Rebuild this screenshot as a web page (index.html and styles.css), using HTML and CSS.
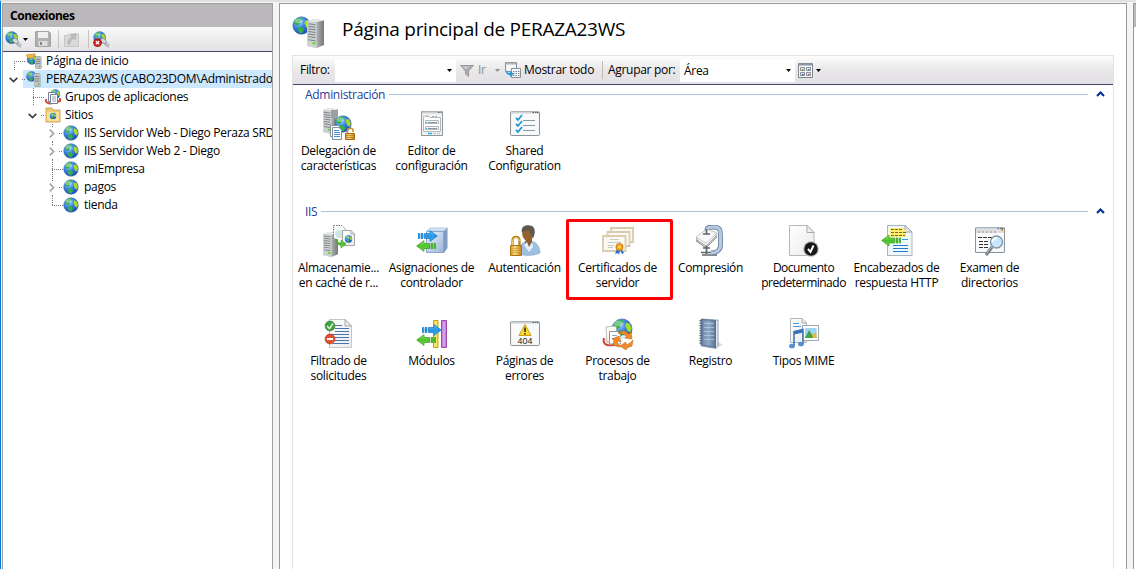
FILE: index.html
```html
<!DOCTYPE html>
<html lang="es">
<head>
<meta charset="utf-8">
<title>Administrador de IIS</title>
<link rel="stylesheet" href="styles.css">
</head>
<body>
<svg class="defs" width="0" height="0" aria-hidden="true">
  <defs>
    <radialGradient id="gSea" cx=".35" cy=".28" r=".8"><stop offset="0" stop-color="#b4e2ff"/><stop offset=".45" stop-color="#3b82e2"/><stop offset="1" stop-color="#1a47a8"/></radialGradient>
    <linearGradient id="gSteel" x1="0" x2="1"><stop offset="0" stop-color="#e8e8e8"/><stop offset=".6" stop-color="#a9adad"/><stop offset="1" stop-color="#737878"/></linearGradient>
    <linearGradient id="gBlue" x1="0" y1="0" x2="0" y2="1"><stop offset="0" stop-color="#6cc4f8"/><stop offset=".5" stop-color="#2196e4"/><stop offset="1" stop-color="#49b2f0"/></linearGradient>
    <linearGradient id="gGreen" x1="0" y1="0" x2="0" y2="1"><stop offset="0" stop-color="#9be86c"/><stop offset=".5" stop-color="#4cc22a"/><stop offset="1" stop-color="#7adb52"/></linearGradient>
    <linearGradient id="gBox" x1="0" y1="0" x2="1" y2="1"><stop offset="0" stop-color="#edf5fc"/><stop offset="1" stop-color="#9ab5d8"/></linearGradient>
    <linearGradient id="gGold" x1="0" x2="1"><stop offset="0" stop-color="#d6982a"/><stop offset=".4" stop-color="#f9db84"/><stop offset="1" stop-color="#bd7d14"/></linearGradient>
    <linearGradient id="gPaper" x1="0" y1="0" x2="1" y2="1"><stop offset="0" stop-color="#fff"/><stop offset="1" stop-color="#ebebee"/></linearGradient>
    <linearGradient id="gBook" x1="0" x2="1"><stop offset="0" stop-color="#6b86aa"/><stop offset=".5" stop-color="#8fa9c9"/><stop offset="1" stop-color="#5d7799"/></linearGradient>
  </defs>
  <symbol id="globe" viewBox="0 0 16 16">
    <circle cx="8" cy="8" r="7.300" fill="url(#gSea)" stroke="#3a64a8" stroke-width=".5"/>
    <path d="M2 4.500 4.500 1.800 8 1.300 9 3 7 4.500 6.500 7 4.500 8 2 6.500ZM5.500 9 8.500 9.500 10 11.500 8.500 14.500 6 14 5 11.500Z" fill="#35b04a"/>
    <path d="M11 3.500 13.500 4 15 7.500 14 10.500 12 9.500 10.500 6Z" fill="#a2dc28"/>
    <ellipse cx="5.500" cy="4" rx="3.200" ry="2" fill="#fff" opacity=".35"/>
  </symbol>
  <symbol id="server" viewBox="0 0 14 28" preserveAspectRatio="none">
    <path d="M0 2 6 0 14 1.500V25L8 28 0 26Z" fill="url(#gSteel)"/>
    <path d="M0 2 8 3V28L0 26Z" fill="#cfd2d2"/><path d="M0 2 6 0 14 1.500 8 3Z" fill="#e9eaea"/>
    <path d="M1 4.500 7 5.500M1 7 7 8M1 9.500 7 10.500M1 12 7 13M1 14.500 7 15.500M1 17 7 18M1 20 7 21" stroke="#7d8282"/>
    <rect x="4.500" y="22.500" width="2.500" height="2" fill="#5ce01e"/>
  </symbol>
  <symbol id="serverMini" viewBox="0 0 6 12" preserveAspectRatio="none">
    <path d="M0 .5H5L6 1.500V11.500H1L0 10.500Z" fill="#c3c6c6" stroke="#8b8f8f" stroke-width=".6"/>
    <path d="M1 3H5M1 5H5M1 7H5" stroke="#737878" stroke-width=".8"/><path d="M3.500 9.500H5" stroke="#47c318"/>
  </symbol>
  <symbol id="arrowR" viewBox="0 0 20 12">
    <path d="M0 3.500H1.500V8.500H0ZM3 3.500H5V8.500H3ZM6.500 3.500H12V.6L19.300 6 12 11.400V8.500H6.500Z" fill="url(#gBlue)" stroke="#1576c0" stroke-width=".7"/>
  </symbol>
  <symbol id="arrowL" viewBox="0 0 20 12">
    <path d="M20 3.500H18.500V8.500H20ZM17 3.500H15V8.500H17ZM13.500 3.500H8V.6L.7 6 8 11.400V8.500H13.500Z" fill="url(#gGreen)" stroke="#339c19" stroke-width=".7"/>
  </symbol>
  <symbol id="window" viewBox="0 0 30 25" preserveAspectRatio="none">
    <rect x=".5" y=".5" width="29" height="24" rx="1" fill="#f4f5f6" stroke="#8c9399"/>
    <path d="M1 1.500H29" stroke="#cdd3d9" stroke-width="2"/><path d="M22.500 1.500H24M25 1.500H26.500M27 1.500H28.500" stroke="#50606e"/>
    <rect x="2" y="3" width="26" height="20" fill="#fafafa"/>
  </symbol>
  <symbol id="plug" viewBox="0 0 18 18">
    <path d="M9 10C13 9 12 15 17 16" fill="none" stroke="#7a858b" stroke-width="3"/><path d="M9 10C13 9 12 15 17 16" fill="none" stroke="#cbd3d6" stroke-width="1.400"/>
    <use href="#globe" width="14" height="14"/><ellipse cx="11" cy="10.500" rx="3.300" ry="2.200" transform="rotate(40 11 10.500)" fill="#d5dbdd" stroke="#7b878d" stroke-width=".7"/>
  </symbol>
  <symbol id="caret" viewBox="0 0 5 3"><path d="M0 0H5L2.500 3Z" fill="currentColor"/></symbol>
  <symbol id="collapse" viewBox="0 0 9 6"><path d="M1 5 4.500 1.500 8 5" fill="none" stroke="#002d96" stroke-width="2"/></symbol>
  <symbol id="open" viewBox="0 0 9 6"><path d="M.7.800 4.500 4.600 8.300.800" fill="none" stroke="#404040" stroke-width="1.700"/></symbol>
  <symbol id="closed" viewBox="0 0 6 9"><path d="M.8.700 4.600 4.500.8 8.300" fill="none" stroke="#a6a6a6" stroke-width="1.700"/></symbol>
</svg>

<div class="app">
  <aside class="connections">
    <h2 class="pane-title">Conexiones</h2>
    <div class="pane-tools">
      <svg class="tool-plug" width="17" height="17"><use href="#plug"/></svg>
      <svg class="tool-caret" width="5" height="3"><use href="#caret"/></svg>
      <svg class="tool-save" width="16" height="16" viewBox="0 0 16 16"><path d="M.7.700H14L15.300 2V15.300H.7Z" fill="#b2b2b2" stroke="#979797"/><path d="M3 1H13V7H3Z" fill="#f0f0f0"/><path d="M3.500 10H12.500V15H3.500Z" fill="#dedede"/><path d="M5 11H7V14H5Z" fill="#888"/></svg>
      <i class="sep"></i>
      <svg class="tool-up" width="15" height="15" viewBox="0 0 15 15"><path d="M.5 3.500H4L5 2H14.500V14.500H.5Z" fill="#dadada" stroke="#c6c6c6"/><path d="M3.500 12C4 8 5 6 8 5L6.500 3 12 1.500 11.500 7.500 9.800 6.500C7 8 6 10 6 12Z" fill="#bbb" stroke="#aaa" stroke-width=".5"/></svg>
      <i class="sep second"></i>
      <svg width="17" height="17" viewBox="0 0 17 17"><use href="#plug" width="17" height="17"/><circle cx="4.500" cy="11.700" r="4" fill="#cf1b1b" stroke="#8d1010" stroke-width=".5"/><path d="M2.800 10 6.200 13.400M6.200 10 2.800 13.400" stroke="#fff" stroke-width="1.300"/></svg>
    </div>
    <ul class="tree">
      <li class="l1"><svg class="twig" width="17" height="18"><path class="dots" d="M5.500 9V18M5 9.500H17"/></svg>
        <svg width="16" height="16" viewBox="0 0 16 16"><use href="#globe" x=".5" y="1" width="11" height="11"/><use href="#serverMini" x="9" y="3" width="6.500" height="13"/><path d="M0 2 3 1 6 2 9 0 8 4 5 5 2 5Z" fill="#f5b93a" stroke="#d48b17" stroke-width=".5"/></svg><span>Página de inicio</span></li>
      <li class="l1 selected"><svg class="twig" width="17" height="18"><use href="#open" y="7" width="9" height="6"/><path class="dots" d="M13 9.500H17"/></svg>
        <svg width="16" height="16" viewBox="0 0 16 16"><use href="#globe" y="0" width="11" height="11"/><use href="#serverMini" x="8" y="2" width="6.500" height="14"/></svg><span class="root">PERAZA23WS (CABO23DOM\Administrado</span></li>
      <li class="l2"><svg class="twig" width="17" height="18"><path class="dots" d="M5.500 0V18M5 9.500H17"/></svg>
        <svg width="16" height="16" viewBox="0 0 16 16"><use href="#globe" x="5" width="10.500" height="10.500"/><path d="M1 10C0 14 4 15 8 14L15 12V9" fill="none" stroke="#d04838" stroke-width="2"/><path d="M3.500 3.500H10.500V12.500H3.500Z" fill="#fff" stroke="#718096"/><path d="M5.500 5.500H12.500V14.500H5.500Z" fill="#fff" stroke="#718096"/><path d="M7 8H11M7 10H11M7 12H11" stroke="#91a3b7"/></svg><span>Grupos de aplicaciones</span></li>
      <li class="l2"><svg class="twig" width="17" height="18"><use href="#open" y="7" width="9" height="6"/><path class="dots" d="M13 9.500H17"/></svg>
        <svg width="16" height="16" viewBox="0 0 16 16"><path d="M1 3V1H7L8 3H15V15H1Z" fill="#f0cc76" stroke="#c99c3e" stroke-width=".8"/><path d="M2 5H14V14H2Z" fill="#f9e19b"/><use href="#globe" x="4.500" y="5.500" width="7" height="7"/></svg><span>Sitios</span></li>
      <li class="l3"><svg class="twig" width="16" height="18"><path class="dots" d="M5.500 0V3M5.500 17V18M12 9.500H16"/><use href="#closed" x="2" y="5" width="6" height="9"/></svg><svg width="16" height="16"><use href="#globe"/></svg><span>IIS Servidor Web - Diego Peraza SRD</span></li>
      <li class="l3"><svg class="twig" width="16" height="18"><path class="dots" d="M5.500 0V3M5.500 17V18M12 9.500H16"/><use href="#closed" x="2" y="5" width="6" height="9"/></svg><svg width="16" height="16"><use href="#globe"/></svg><span>IIS Servidor Web 2 - Diego</span></li>
      <li class="l3"><svg class="twig" width="16" height="18"><path class="dots" d="M5.500 0V18M5 9.500H16"/></svg><svg width="16" height="16"><use href="#globe"/></svg><span>miEmpresa</span></li>
      <li class="l3"><svg class="twig" width="16" height="18"><path class="dots" d="M5.500 0V3M5.500 17V18M12 9.500H16"/><use href="#closed" x="2" y="5" width="6" height="9"/></svg><svg width="16" height="16"><use href="#globe"/></svg><span>pagos</span></li>
      <li class="l3"><svg class="twig" width="16" height="18"><path class="dots" d="M5.500 0V9M5 9.500H16"/></svg><svg width="16" height="16"><use href="#globe"/></svg><span>tienda</span></li>
    </ul>
  </aside>

  <main class="home">
    <header class="home-head">
      <svg width="34" height="34" viewBox="0 0 34 34"><use href="#globe" x="0" y="1" width="19" height="19"/><use href="#server" x="15" y="4" width="17" height="29"/></svg>
      <h1>Página principal de PERAZA23WS</h1>
    </header>
    <section class="features">
      <div class="filterbar">
        <label class="lbl-filter">Filtro:</label>
        <div class="combo filter"><svg width="5" height="3"><use href="#caret"/></svg></div>
        <svg class="funnel" width="14" height="13" viewBox="0 0 14 13"><path d="M.5 1.500H13.500L8.500 7V12.500L5.500 10V7Z" fill="#adadad" stroke="#999"/><path d="M2 2.500H9L6 5Z" fill="#d0d0d0"/></svg>
        <span class="go">Ir</span>
        <svg class="go-caret" width="5" height="3"><use href="#caret"/></svg>
        <svg class="showall" width="16" height="16" viewBox="0 0 16 16"><path d="M.5.500H11.500V9.500H.5Z" fill="#f4f6f8" stroke="#84919c"/><path d="M1 1.500H11" stroke="#aab5be" stroke-width="2"/><path d="M6.500 6.500H15.500V15.500H6.500Z" fill="#f8f8f8" stroke="#84919c"/><path d="M8 9.500H15M8 11.500H15M8 13.500H15" stroke="#7a8793" stroke-dasharray="1.500 1"/><path d="M1 7C1 10 3 11 5 11V9L9 12 5 15V13C2 13 0 11 1 7Z" fill="#2f96d8"/></svg>
        <span class="show-text">Mostrar todo</span>
        <i class="bar-sep"></i>
        <label class="lbl-group">Agrupar por:</label>
        <div class="combo area"><span>Área</span><svg width="5" height="3"><use href="#caret"/></svg></div>
        <svg class="view" width="15" height="15" viewBox="0 0 15 15"><path d="M.5.500H14.500V14.500H.5Z" fill="#f7f7f7" stroke="#7d868f"/><path d="M1 1.500H14" stroke="#8b97a6" stroke-width="2"/><g fill="#e4e8ef" stroke="#6f7882" stroke-width=".8"><path d="M2.500 4.500H6.500V7.500H2.500ZM8.500 4.500H12.500V7.500H8.500ZM2.500 9.500H6.500V12.500H2.500ZM8.500 9.500H12.500V12.500H8.500Z"/></g><path d="M4 6.500H5.500" stroke="#b49400"/><path d="M10 6.500H11.500" stroke="#0791b5"/><path d="M4 11.500H5.500" stroke="#33b"/><path d="M10 11.500H11.500" stroke="#d33"/></svg>
        <svg class="view-caret" width="5" height="3"><use href="#caret"/></svg>
      </div>

      <div class="group">
        <div class="group-head"><h3 class="admin">Administración</h3><hr><svg width="9" height="6"><use href="#collapse"/></svg></div>
        <div class="grid">
          <div class="item"><svg viewBox="0 0 32 32"><use href="#server" width="15" height="26"/><path d="M8 2H15V10H8Z" fill="#98a0a2"/><use href="#globe" x="11" y="7" width="18" height="18"/><path d="M7.500 17.500H16.500V28.500H7.500Z" fill="#fff" stroke="#849099"/><path d="M9.500 19.500H16L18.500 22V31.500H9.500Z" fill="#fff" stroke="#849099"/><path d="M11 22.500H16M11 24.500H17M11 26.500H17M11 28.500H17" stroke="#4991d4"/><path d="M24.500 25V22.500C24.500 19.500 30 19.500 30 22.500V24" fill="none" stroke="#c9922a" stroke-width="1.600"/><path d="M22.500 25.500H31.500V31.500H22.500Z" fill="url(#gGold)" stroke="#a66b0c"/><path d="M23 27.500H31M23 29.500H31" stroke="#b67c16" stroke-width=".7"/></svg><span>Delegación de<br>características</span></div>
          <div class="item"><svg viewBox="0 0 32 32"><path d="M5.500 3.500H26.500V27.500H5.500Z" fill="#f4f4f4" stroke="#8f969b"/><path d="M6 4.500H26" stroke="#c9ced3" stroke-width="2"/><path d="M22 4.500H25.500" stroke="#5d6770" stroke-dasharray="1 .5"/><path d="M7.500 9.500V8H13L14 9.500H24.500V23.500H7.500Z" fill="#fff" stroke="#b4b9bd"/><path d="M10 8.500H12M16 8.500H18M19 8.500H21" stroke="#aaa"/><path d="M9.500 12.500H22.500V15.500H9.500ZM9.500 18.500H22.500V21.500H9.500Z" fill="#f7f7f7" stroke="#b4b9bd"/><path d="M12 14.500H21M12 20.500H21" stroke="#8a949b"/><path d="M10 14.500H11M10 20.500H11" stroke="#15b5e1"/><path d="M12 25.500H16" stroke="#1cb7e8" stroke-width="1.500"/><path d="M17 25.500H20M21 25.500H24" stroke="#c6c9cb" stroke-width="1.500"/></svg><span>Editor de<br>configuración</span></div>
          <div class="item"><svg viewBox="0 0 32 32"><use href="#window" x="1" y="3" width="30" height="25"/><path d="M7 10 9 12 13 7M7 16 9 18 13 13M7 22 9 24 13 19" fill="none" stroke="#2397cf" stroke-width="1.800"/><path d="M14 12.500H26M14 17.500H26M14 22.500H26" stroke="#8899a6"/></svg><span>Shared<br>Configuration</span></div>
        </div>
      </div>

      <div class="group">
        <div class="group-head"><h3>IIS</h3><hr><svg width="9" height="6"><use href="#collapse"/></svg></div>
        <div class="grid">
          <div class="item"><svg viewBox="0 0 32 32"><use href="#server" y="7" width="15" height="25"/><path d="M10.500 13V.5H19L22.500 4V17" fill="#fafafa" stroke="#777" stroke-dasharray="1.500 1"/><circle cx="16.500" cy="9" r="4" fill="#b9ddda" opacity=".7"/><path d="M19.500 5.500H28L31.500 9V20.500H19.500Z" fill="url(#gPaper)" stroke="#a5a5a5"/><path d="M28 5.500V9H31.500" fill="none" stroke="#aaa"/><use href="#globe" x="21.500" y="10" width="8" height="8"/><path d="M13 14C14 17 16 18 18 18V15L23 19 18 23V20.500C15 20 13 18 13 14Z" fill="url(#gGreen)" stroke="#36961e" stroke-width=".6"/></svg><span>Almacenamie...<br>en caché de r...</span></div>
          <div class="item"><svg viewBox="0 0 32 32"><path d="M11 6 14 3H31.500V23L28 28H11Z" fill="#7f9dc4"/><path d="M10.500 6.500H27.500V27.500H10.500Z" fill="url(#gBox)" stroke="#8aa6cb"/><path d="M11 6 14 3H31.500L28 6Z" fill="#d9e8f7" stroke="#8fabca" stroke-width=".6"/><use href="#arrowR" x="2" y="5" width="20" height="12"/><use href="#arrowL" x="0" y="15" width="20" height="12"/></svg><span>Asignaciones de<br>controlador</span></div>
          <div class="item"><svg viewBox="0 0 32 32"><path d="M10 29C10 20 14 16 20 16 27 16 31 21 31 28 25 31 15 31 10 29Z" fill="#9dbfe3" stroke="#7599c1" stroke-width=".5"/><path d="M17 14H23V18L20 23 16 18Z" fill="#8b5b35"/><path d="M18 17 20 22 23 17 24 22 20 27 15 20Z" fill="#e7f0f8"/><ellipse cx="19" cy="8.500" rx="5.800" ry="7.300" fill="#94602f"/><path d="M13 8C11 1 18-1 23 1 27 3 26 10 24 13L21 8 20 5C17 6 14 5 13 8Z" fill="#5d5750"/><path d="M3.500 21V16C3.500 10.500 10.500 10.500 10.500 16V21" fill="none" stroke="#b5851d" stroke-width="2.300"/><path d="M3.500 20V16C3.500 11.500 10.500 11.500 10.500 16" fill="none" stroke="#f5dd84" stroke-width=".8"/><path d="M1.500 20.500H12.500V30.500H1.500Z" fill="url(#gGold)" stroke="#ad7413"/><path d="M2 23.500H12M2 25.500H12M2 27.500H12" stroke="#cf9830" stroke-width=".6"/></svg><span>Autenticación</span></div>
          <div class="item marked"><svg viewBox="0 0 32 32"><g fill="#fbf9f4" stroke="#d3c3a5" stroke-width="1.800"><path d="M9 3H31V17H9Z"/><path d="M5.500 7H27.500V21H5.500Z"/><path d="M1 11H23.500V26H1Z"/></g><g fill="none" stroke="#efe7d6" stroke-width=".8" stroke-dasharray="1 1"><path d="M9 3H31V17H9Z"/><path d="M5.500 7H27.500V21H5.500Z"/><path d="M1 11H23.500V26H1Z"/></g><path d="M8 14.500H17M6 17.500H19M6 20.500H12M6 22.500H11" stroke="#b9b8b0" stroke-width=".7"/><path d="M15 24 13 29 16 28 17 30 18 25 20 29 22 28 19 24Z" fill="#246bd4"/><circle cx="17.500" cy="22" r="3.600" fill="#f0a11e" stroke="#c07a0a" stroke-width=".8"/><circle cx="17.500" cy="22" r="1.500" fill="#ffd358"/></svg><span>Certificados de<br>servidor</span></div>
          <div class="item"><svg viewBox="0 0 32 32"><path d="M6 27.500H22M7 30H22" stroke="#5d656c" stroke-width="1.300"/><path d="M12 7V5C12 2 15 2 19 2 25.500 2 25.500 6 25.500 11V20C25.500 26 20 28 16 28" fill="none" stroke="#6c82a0" stroke-width="4.800"/><path d="M12 7V5C12 2 15 2 19 2 25.500 2 25.500 6 25.500 11V20C25.500 26 20 28 16 28" fill="none" stroke="#b6c9e0" stroke-width="3"/><path d="M1 16 12 8 22 12 11 23Z" fill="#c9cac9" stroke="#888" stroke-width=".8"/><path d="M1 14 12 6 22 10 11 21Z" fill="#fff" stroke="#8d8d8d" stroke-width=".7"/><path d="M1 12 12 4 22 8 11 18.500Z" fill="#f8f8f8" stroke="#aaa" stroke-width=".7"/><path d="M8 9H15M11.500 4V9M11.500 21V29M8 23H15" stroke="#5d656c" stroke-width="1.700"/></svg><span>Compresión</span></div>
          <div class="item"><svg viewBox="0 0 32 32"><path d="M1.500.500H19L26 7.500V30.500H1.500Z" fill="url(#gPaper)" stroke="#b7b7b7"/><path d="M19 .500V7.500H26Z" fill="#eee" stroke="#aaa"/><circle cx="23" cy="24" r="7.800" fill="#b8b8b8"/><circle cx="23" cy="24" r="6.700" fill="#171717"/><path d="M20 24 22.500 27 25.500 20.500" fill="none" stroke="#fff" stroke-width="2"/></svg><span class="tight">Documento<br>predeterminado</span></div>
          <div class="item"><svg viewBox="0 0 32 32"><path d="M6.500.500H24L31 7V30.500H6.500Z" fill="#eff8fd" stroke="#a9b5bc"/><path d="M24 .500V7H31Z" fill="#e4e9ec" stroke="#9ca5aa"/><path d="M9 3H23V5H25V12H9Z" fill="#ffed71"/><path d="M10 4.500H22M10 7.500H25M10 10.500H24" stroke="#746b24" stroke-dasharray="3 1"/><path d="M21 14.500H27" stroke="#389bda"/><path d="M12 20.500H27M12 23.500H27M12 26.500H27" stroke="#2379cc"/><use href="#arrowL" y="9" width="20" height="13"/></svg><span>Encabezados de<br>respuesta HTTP</span></div>
          <div class="item"><svg viewBox="0 0 32 32"><use href="#window" y="2" x="1" width="30" height="26"/><path d="M2 6.500H30" stroke="#ddd" stroke-width="3"/><path d="M4 7H22" stroke="#999" stroke-dasharray="2 2"/><path d="M27 5H29" stroke="#e5952e" stroke-width="2"/><path d="M4 12.500H19M5 16.500H15M5 19.500H15M5 22.500H15" stroke="#333" stroke-dasharray="4 1"/><path d="M18 22 12 30" stroke="#6d7479" stroke-width="3"/><path d="M17.500 22 12 29.500" stroke="#bbc1c5" stroke-width="1"/><circle cx="22.500" cy="17" r="6" fill="#c9e7fc" stroke="#8196a5" stroke-width="1.400"/><path d="M18.500 17A4 4 0 0 1 23 13" fill="none" stroke="#fff" stroke-width="2"/></svg><span>Examen de<br>directorios</span></div>
          <div class="item"><svg viewBox="0 0 32 32"><path d="M6.500 1.500H22L28.500 8V29.500H6.500Z" fill="url(#gPaper)" stroke="#c6c6c6"/><path d="M22 1.500V8H28.500Z" fill="#eee" stroke="#aaa"/><path d="M12 7.500H19M12 10.500H26M12 13.500H26M8 16.500H26M12 19.500H26M12 22.500H26M10 25.500H26" stroke="#4d75ad"/><circle cx="7" cy="8" r="4.900" fill="#44a045" stroke="#256f28" stroke-width=".6"/><path d="M4 8 6.500 10.500 10 5.500" fill="none" stroke="#dbf3d9" stroke-width="1.500"/><circle cx="7" cy="21" r="4.900" fill="#e2502f" stroke="#a91d10" stroke-width=".6"/><path d="M4 21H10" stroke="#fff" stroke-width="2"/></svg><span>Filtrado de<br>solicitudes</span></div>
          <div class="item"><svg viewBox="0 0 32 32"><path d="M17.500 2.500H22V29.500H17.500Z" fill="#f8e260" stroke="#c5a21f"/><path d="M25.500 2.500H30.500V29.500H25.500Z" fill="#c884d8" stroke="#9c4bb0"/><path d="M28 4V28" stroke="#e5b9ee"/><use href="#arrowR" x="6" y="6" width="20" height="12"/><use href="#arrowL" x="0" y="16" width="20" height="12"/></svg><span>Módulos</span></div>
          <div class="item"><svg viewBox="0 0 32 32"><use href="#window" x="1" y="3" width="30" height="25"/><path d="M16 6.500 22 17.500H10Z" fill="#ffdc29" stroke="#c6a011"/><path d="M16 9.500V14M16 15V16.500" stroke="#222" stroke-width="1.500"/><text class="err" x="8.500" y="26" textLength="15" lengthAdjust="spacingAndGlyphs">404</text></svg><span>Páginas de<br>errores</span></div>
          <div class="item"><svg viewBox="0 0 32 32"><use href="#globe" x="9" y="0" width="22" height="22"/><path d="M2 20C0 27 6 29 16 26" fill="#f7e5e1" stroke="#cf4939" stroke-width="2"/><path d="M4 9 14 8 16 22 5 24Z" fill="#fffdf5" stroke="#9c9c94" stroke-width=".7"/><path d="M7.500 13.500H16L18.500 17V26H7.500Z" fill="#fff" stroke="#8e989f"/><path d="M10 17.500H15M10 20.500H16" stroke="#8ba5bd"/><circle cx="22.500" cy="22" r="5" fill="#fff" opacity=".85"/><g fill="#f28a25" stroke="#b85c0c" stroke-width=".5"><path d="M16 15 22 12.500 27 16 29 14 30 21 23 20 25 18 21 16Z"/><path d="M31 22 30 28 25 30 24 32 18 28 24 24 24 27 28 25Z"/><path d="M17 29 11 27 12 22 10 21 17 18 19 24 16 23 15 26 19 28Z"/></g></svg><span>Procesos de<br>trabajo</span></div>
          <div class="item"><svg viewBox="0 0 32 32"><path d="M20 30 28 27 22 23Z" fill="#ddd"/><path d="M6 1 20 2 23 2V28L21 30.500 6 28Z" fill="#e6ecf2" stroke="#6b82a0" stroke-width=".7"/><path d="M6.500 1.500 20.500 2.500V29.500L6.500 27Z" fill="url(#gBook)" stroke="#566d8d"/><path d="M9 5.500H19M9 9.500H19M9 13.500H19M9 17.500H19M9 21.500H19" stroke="#c0d0e0" stroke-width=".7"/><path d="M6 2V27" stroke="#566579" stroke-width="3" stroke-dasharray="1.200 1.300"/></svg><span>Registro</span></div>
          <div class="item"><svg viewBox="0 0 32 32"><path d="M2.500.500H14L18.500 5V24.500H2.500Z" fill="url(#gPaper)" stroke="#b0b5b9"/><path d="M14 .500V5H18.500" fill="none" stroke="#aaa"/><path d="M5 5.500H11M5 8.500H13" stroke="#4b9bdc"/><path d="M14.500 7.500H30.500V22.500H14.500Z" fill="#fff" stroke="#a0a9b1"/><path d="M17 10H28.500V20H17Z" fill="#9cd5f5"/><path d="M17 20 21 12 25 18 27 16 28.500 20Z" fill="#44a540"/><path d="M24 17 28.500 14V20H25Z" fill="#e4ba3a"/><path d="M6 28V13.500L15 11.500V26" fill="none" stroke="#3972b7" stroke-width="1.500"/><path d="M6 15 15 13" stroke="#3972b7" stroke-width="3"/><ellipse cx="4" cy="28" rx="2.900" ry="2.300" fill="#568ed1"/><ellipse cx="13" cy="26" rx="2.900" ry="2.300" fill="#568ed1"/></svg><span>Tipos MIME</span></div>
        </div>
      </div>
    </section>
  </main>
  <aside class="actions"><div class="actions-head"></div></aside>
</div>
</body>
</html>
```
FILE: styles.css
```css
*, *::after { box-sizing: border-box; }
body { margin: 0; font: 12px/15px "Open Sans", "Noto Sans", sans-serif; letter-spacing: -0.3px; color: #000; background: #f5f5f5; overflow: hidden; }
svg { display: block; flex: none; }
.defs { position: absolute; }
h1, h2, h3, ul, hr { margin: 0; padding: 0; }
.app { height: 569px; display: grid; grid-template-columns: 271px 848px 3px; column-gap: 6px; padding-left: 1px; border-left: 1px solid #0078d7; border-top: 2px solid #e1e1e1; padding-top: 1px; overflow: hidden; }

.connections { border: 1px solid #a0a0a0; border-bottom: 0; background: #fff; overflow: hidden; }
.pane-title { height: 23px; padding-left: 7px; font-size: 12px; line-height: 23px; font-weight: 700; letter-spacing: -0.45px; background: #bab8ba; }
.pane-tools { height: 25px; display: flex; align-items: center; padding-left: 2px; background: linear-gradient(#fafafa, #e3e1e3); border-bottom: 1px solid #45456b; }
.tool-caret { margin-left: 1px; }
.tool-save { margin-left: 7px; }
.sep { width: 1px; height: 18px; margin-left: 7px; background: #c5c3b8; }
.tool-up { margin-left: 5px; }
.sep.second { margin: 0 4px 0 9px; }
.tree { list-style: none; }
.tree li { height: 18px; display: flex; align-items: center; white-space: nowrap; }
.tree span { margin-left: 4px; padding-bottom: 1px; }
.l1 { padding-left: 6px; }
.l2 { padding-left: 25px; }
.l3 { padding-left: 44px; }
.tree .l3 span { margin-left: 5px; }
.tree .root { letter-spacing: -0.28px; }
.selected { background: linear-gradient(90deg, transparent 20px, #cce8ff 20px); }
.dots { stroke: #777; stroke-dasharray: 1 1; fill: none; }

.home { border: 1px solid #999; border-bottom: 0; background: #fff; display: flex; flex-direction: column; padding: 0 12px; }
.home-head { height: 51px; display: flex; padding-top: 11px; }
h1 { margin: 0 0 0 16px; font-size: 19px; line-height: 28px; font-weight: 400; letter-spacing: -0.28px; white-space: nowrap; }
.features { flex: 1; border: 1px solid #e3e3e3; border-bottom: 0; }
.filterbar { height: 29px; display: flex; align-items: center; white-space: nowrap; background: linear-gradient(#fdfdfd, #e8e6e8 55%, #e3e1e3); border-bottom: 1px solid #45456b; }
.filterbar label, .show-text, .go { padding-bottom: 1px; }
.lbl-filter { width: 35px; margin-left: 7px; }
.combo { height: 23px; display: flex; align-items: center; background: #fff; }
.combo svg { margin-left: auto; margin-right: 4px; }
.filter { width: 121px; }
.funnel { margin-left: 4px; }
.go { width: 17px; margin-left: 4px; color: #8d8d8d; }
.go-caret { color: #8d8d8d; }
.showall { margin-left: 5px; }
.show-text { width: 78px; margin-left: 3px; }
.bar-sep { width: 1px; height: 18px; background: #bcbca9; }
.lbl-group { width: 72px; margin-left: 5px; }
.area { width: 115px; padding-left: 4px; }
.view { margin-left: 3px; }
.view-caret { margin-left: 3px; }

.group { height: 117px; }
.group + .group { height: auto; }
.group-head { height: 19px; display: flex; align-items: center; padding: 0 8px 1px 12px; }
.group-head svg { margin-left: 8px; }
h3 { font-size: 12px; line-height: 15px; font-weight: 400; color: #1e3c9c; }
hr { flex: 1; height: 1px; margin-left: 4px; border: 0; background: #b0bfe2; }
.grid { display: grid; grid-template-columns: repeat(8, 93px); grid-auto-rows: 93px; padding-top: 4px; margin-left: -1px; }
.item { position: relative; display: flex; flex-direction: column; align-items: center; text-align: center; white-space: nowrap; }
.item > svg { width: 32px; height: 32px; margin-bottom: 3px; }
.tight { letter-spacing: -0.5px; }
.marked::after { content: ""; position: absolute; left: -5px; top: -6px; width: 107px; height: 81px; border: 3px solid #fb0207; border-radius: 2px; }
.err { font: 400 9px "Liberation Sans", sans-serif; letter-spacing: 0; fill: #222; }

.actions { border: 1px solid #999; border-right: 0; border-bottom: 0; background: #fff; }
.actions-head { height: 23px; background: #bab8ba; }
```
